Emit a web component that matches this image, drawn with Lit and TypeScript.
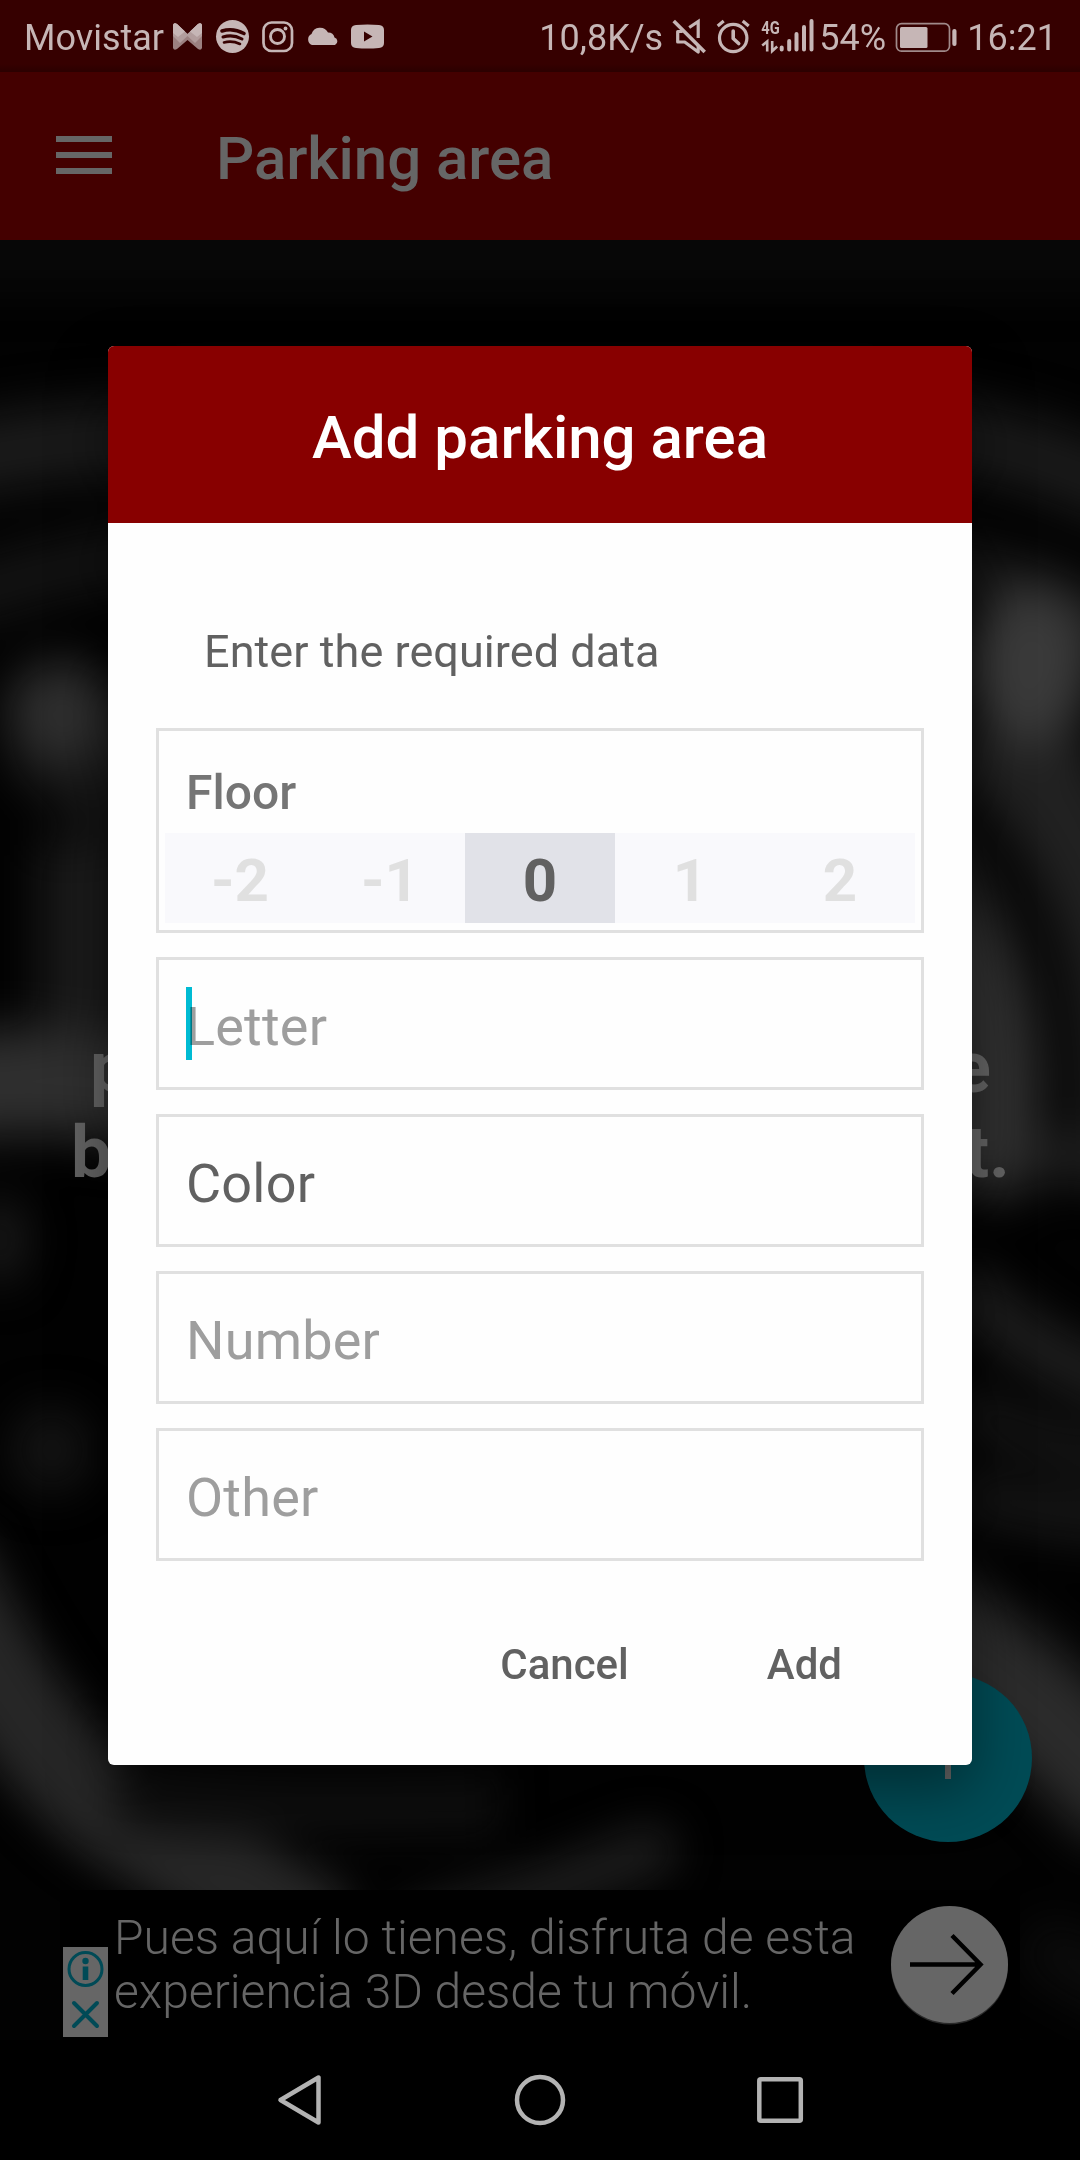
import { LitElement, html, svg, css } from "lit";
import { customElement, property } from "lit/decorators.js";
import { classMap } from "lit/directives/class-map.js";

const backdrop = svg`
  <defs>
    <filter id="soft" filterUnits="userSpaceOnUse" x="-150" y="-150" width="1400" height="2100" color-interpolation-filters="sRGB"><feGaussianBlur stdDeviation="24" /></filter>
    <filter id="mid" filterUnits="userSpaceOnUse" x="-150" y="-150" width="1400" height="2100" color-interpolation-filters="sRGB"><feGaussianBlur stdDeviation="21" /></filter>
  </defs>
  <rect width="1080" height="1800" fill="#020202" />
  <g fill="none" filter="url(#soft)">
    <path d="M-60 15 H1140" stroke="#090909" stroke-width="60" />
    <path d="M-60 225 Q60 195 180 200" stroke="#1b1b1b" stroke-width="75" />
    <path d="M-60 365 Q60 320 180 310" stroke="#141414" stroke-width="60" />
    <path d="M900 190 Q1020 200 1140 260" stroke="#1a1a1a" stroke-width="75" />
    <path d="M900 320 Q1010 320 1140 400" stroke="#181818" stroke-width="50" />
    <path d="M40 480 L140 560" stroke="#161616" stroke-width="120" />
    <ellipse cx="62" cy="472" rx="56" ry="52" fill="#2f2f2f" />
    <path d="M85 600 V800" stroke="#1b1b1b" stroke-width="90" />
    <path d="M-60 850 Q40 830 180 860" stroke="#2f2f2f" stroke-width="105" />
    <ellipse cx="0" cy="1000" rx="22" ry="44" fill="#1f1f1f" />
    <ellipse cx="52" cy="1210" rx="38" ry="42" fill="#161616" />
    <path d="M950 520 Q1090 640 1060 940" stroke="#212121" stroke-width="220" />
    <ellipse cx="1030" cy="425" rx="65" ry="80" fill="#3a3a3a" />
    <path d="M930 540 Q1075 660 1064 900" stroke="#030303" stroke-width="44" />
    <path d="M930 690 Q1025 790 970 950" stroke="#303030" stroke-width="95" />
    <path d="M960 1040 Q1030 1120 1140 1150" stroke="#222" stroke-width="48" />
    <path d="M960 1160 Q1030 1210 1140 1220" stroke="#1c1c1c" stroke-width="34" />
    <path d="M960 1250 Q1030 1275 1140 1280" stroke="#191919" stroke-width="44" />
    <path d="M900 1370 Q1000 1420 1140 1570" stroke="#2b2b2b" stroke-width="115" />
    <path d="M1030 1700 L1140 1760" stroke="#0c0c0c" stroke-width="60" />
  </g>
  <g fill="none" filter="url(#mid)">
    <path d="M-70 1310 Q10 1490 110 1570 Q220 1640 330 1700" stroke="#262626" stroke-width="104" />
    <path d="M120 1550 Q240 1570 500 1560" stroke="#0e0e0e" stroke-width="70" />
    <path d="M420 1690 L545 1652 L650 1610" stroke="#1a1a1a" stroke-width="56" stroke-linecap="round" />
  </g>
`;

@customElement("status-bar")
class StatusBar extends LitElement {
  static styles = css`
    :host {
      display: flex;
      justify-content: space-between;
      height: 72px;
      padding: 0 23px 0 24px;
      box-sizing: border-box;
      background: linear-gradient(#360000 64px, #2b0000 72px);
      color: #c6b6b6;
      font-size: 36px;
      line-height: 76px;
      white-space: nowrap;
    }
    .side { display: flex; }
    .carrier { width: 146px; }
    .speed { width: 129px; padding-left: 1px; box-sizing: border-box; }
    .percent { width: 69px; }
    svg { display: block; height: 72px; }
    .net { font: 700 18px/18px "Roboto", sans-serif; }
  `;
  render() {
    return html`
      <div class="side">
        <div class="carrier">Movistar</div>
        <svg width="220" viewBox="170 0 220 72" fill="currentColor">
          <path d="M173 25 Q174 22 177 24 L187.500 34 L198 24 Q201 22 202 25 V48 Q201 51 198 49 L187.500 40 L177 49 Q174 51 173 48Z" fill="#9b8080" />
          <path d="M173 25 Q174 22 177 24 L187.500 34 L198 24 Q201 22 202 25 V36 L195 43 L187.500 36 L180 43 L173 36Z" fill="#b29d9d" />
          <path d="M173 25 Q174 22 177 24 L185 31.500 L178 37 L173 33Z M202 25 Q201 22 198 24 L190 31.500 L197 37 L202 33Z" />
          <circle cx="232.500" cy="36.500" r="16.500" />
          <g fill="none" stroke="#360000" stroke-linecap="round">
            <path d="M222 31 Q233 27.500 244 33.500" stroke-width="3.600" />
            <path d="M223 37 Q233 34 242 39" stroke-width="3" />
            <path d="M224 42.500 Q232 40.200 240 44" stroke-width="2.600" />
          </g>
          <g fill="none" stroke="currentColor">
            <rect x="263.500" y="22.500" width="28.500" height="28.500" rx="8" stroke-width="2.700" />
            <circle cx="277.500" cy="36.500" r="7" stroke-width="2.900" />
          </g>
          <circle cx="285.500" cy="28.500" r="1.900" />
          <path d="M312 45 A6 6 0 0 1 311.500 34 A9 9 0 0 1 328 32.500 A6.500 6.500 0 0 1 334.500 37.500 A4 4 0 0 1 335 45Z" />
          <path fill-rule="evenodd" d="M356 25 Q367.500 24 379 25 Q384 25.500 384 30 V43 Q384 47.500 379 48 Q367.500 49 356 48 Q351 47.500 351 43 V30 Q351 25.500 356 25Z M364 31.500 V41.500 L372.500 36.500Z" />
        </svg>
      </div>
      <div class="side">
        <div class="speed">10,8K/s</div>
        <svg width="152" viewBox="667.300 0 152 72" fill="none" stroke="currentColor">
          <path d="M674 21 L705 52" stroke-width="3.600" />
          <path d="M689.500 27.500 L698.500 21.500 V38" stroke-width="3.200" />
          <path d="M683 31.500 H678 V42 H685 L698.500 52 V45" stroke-width="3.200" stroke-linejoin="round" />
          <circle cx="733.500" cy="38" r="13.700" stroke-width="3.200" />
          <path d="M733.500 31 V38.500 L739 43.500" stroke-width="3.600" stroke-linecap="round" stroke-linejoin="round" />
          <path d="M718 26 L724 21 M749 26 L743 21" stroke-width="3.200" />
          <path d="M762.500 45.500 L767.500 41.500 V51.500 M772.500 41 V51 L777.500 46.500" stroke-width="2.600" />
          <g stroke-width="4" stroke-linecap="round">
            <path d="M782 47.500 V49.500 M789.500 41 V49.500 M796.800 34 V49.500 M804.300 27 V49.500 M811.800 21 V49.500" />
          </g>
          <text class="net" x="761.500" y="33.500" fill="currentColor" stroke="none" textLength="18.500" lengthAdjust="spacingAndGlyphs">4G</text>
        </svg>
        <div class="percent">54%</div>
        <svg width="79" viewBox="888 0 79 72">
          <rect x="896.500" y="23.700" width="53" height="27.500" rx="5" fill="none" stroke="#a08a8a" stroke-width="1.700" />
          <rect x="900" y="27" width="27.500" height="21" rx="1.500" fill="currentColor" />
          <rect x="952.300" y="29" width="4.200" height="17" rx="2" fill="currentColor" />
        </svg>
        <div>16:21</div>
      </div>
    `;
  }
}

@customElement("form-field")
class FormField extends LitElement {
  @property() label = "";
  @property({ type: Boolean }) filled = false;
  @property({ type: Boolean }) focused = false;
  static styles = css`
    :host {
      display: flex;
      align-items: center;
      position: relative;
      height: 133px;
      box-sizing: border-box;
      border: 3px solid #e0e0e0;
      padding: 6px 27px 0;
      font-size: 54px;
      line-height: 64px;
      letter-spacing: 0.2px;
      color: #9e9e9e;
    }
    .filled { color: #616161; }
    .caret {
      position: absolute;
      left: 27px;
      top: 27px;
      width: 6px;
      height: 73px;
      background: #00bcd4;
      mix-blend-mode: multiply;
    }
  `;
  render() {
    return html`
      <span class=${classMap({ filled: this.filled })}>${this.label}</span>
      ${this.focused ? html`<i class="caret"></i>` : null}
    `;
  }
}

@customElement("parking-dialog")
class ParkingDialog extends LitElement {
  @property({ type: Number }) floor = 0;
  static styles = css`
    :host {
      display: block;
      width: 864px;
      height: 1419px;
      border-radius: 6px;
      overflow: hidden;
      background: #fefefe;
      box-shadow: 0 24px 60px rgba(0, 0, 0, 0.4);
    }
    .title {
      height: 177px;
      box-sizing: border-box;
      padding-top: 5px;
      display: flex;
      align-items: center;
      justify-content: center;
      background: #880000;
      color: #fff;
      font-size: 60px;
      font-weight: 500;
    }
    .hint {
      padding: 101px 96px 49px;
      font-size: 45px;
      line-height: 55px;
      letter-spacing: 0.06px;
      color: #616161;
    }
    .form { display: flex; flex-direction: column; gap: 24px; padding: 0 48px; }
    .floor { box-sizing: border-box; height: 205px; border: 3px solid #e0e0e0; padding: 32px 6px 0; }
    .label { padding-left: 21px; font-size: 48px; line-height: 60px; font-weight: 500; color: #757575; }
    .levels { display: grid; grid-template-columns: repeat(5, 1fr); margin-top: 10px; background: #f9f9fc; }
    .level {
      height: 90px;
      line-height: 95px;
      text-align: center;
      font-size: 60px;
      font-weight: 700;
      color: #e0e0e0;
      overflow: hidden;
    }
    .on { background: #e1e2e8; color: #616161; }
    .actions {
      display: flex;
      justify-content: flex-end;
      gap: 138px;
      padding: 78px 130px 0 0;
      font-size: 42px;
      line-height: 52px;
      font-weight: 500;
      color: #616161;
    }
  `;
  render() {
    return html`
      <div class="title">Add parking area</div>
      <div class="hint">Enter the required data</div>
      <div class="form">
        <div class="floor">
          <div class="label">Floor</div>
          <div class="levels">
            ${[-2, -1, 0, 1, 2].map(
              (n) => html`<div class=${classMap({ level: true, on: n === this.floor })}>${n}</div>`
            )}
          </div>
        </div>
        <form-field label="Letter" focused></form-field>
        <form-field label="Color" filled></form-field>
        <form-field label="Number"></form-field>
        <form-field label="Other"></form-field>
      </div>
      <div class="actions"><span>Cancel</span><span>Add</span></div>
    `;
  }
}

@customElement("ad-banner")
class AdBanner extends LitElement {
  static styles = css`
    :host {
      display: flex;
      align-items: center;
      width: 960px;
      height: 150px;
      box-sizing: border-box;
      padding: 0 12px 0 3px;
      background: #000;
      color: #666;
    }
    .choices { display: block; align-self: flex-end; margin-bottom: 3px; background: #666; }
    .copy { flex: 1; padding: 0 0 1px 6px; font-size: 48px; line-height: 54px; font-weight: 300; white-space: nowrap; }
    .go { display: block; }
  `;
  render() {
    return html`
      <svg class="choices" width="45" height="90" fill="none" stroke="#004a56" stroke-linecap="round">
        <circle cx="22.500" cy="22" r="16.500" stroke-width="3" />
        <circle cx="22.500" cy="14" r="3.200" fill="#004a56" stroke="none" />
        <rect x="19.700" y="19.500" width="5.600" height="13.500" fill="#004a56" stroke="none" />
        <path d="M11 56 L34 79 M34 56 L11 79" stroke-width="4" />
      </svg>
      <div class="copy">Pues aquí lo tienes, disfruta de esta<br />experiencia 3D desde tu móvil.</div>
      <svg class="go" width="117" height="119" viewBox="0 0 117 119">
        <circle cx="58.500" cy="60" r="58.500" fill="#2a2a2a" />
        <circle cx="58.500" cy="58.500" r="58.500" fill="#666" />
        <path d="M19 58.500 H89 M61 29.500 L89.500 58.500 L61 87.500" fill="none" stroke="#000" stroke-width="4.500" />
      </svg>
    `;
  }
}

@customElement("app-root")
class AppRoot extends LitElement {
  static styles = css`
    :host {
      display: flex;
      flex-direction: column;
      position: relative;
      width: 1080px;
      height: 2160px;
      overflow: hidden;
      background: #000;
      font-family: "Roboto", "Liberation Sans", sans-serif;
    }
    .appbar {
      display: flex;
      align-items: center;
      gap: 104px;
      height: 168px;
      padding-left: 56px;
      background: #440000;
      color: #666;
      font-size: 60px;
      font-weight: 500;
    }
    .menu { display: flex; flex-direction: column; gap: 10px; width: 56px; padding-bottom: 2px; }
    .menu i { height: 6px; background: #666; }
    .name { padding-top: 4px; letter-spacing: -0.05px; }
    .content {
      position: relative;
      display: flex;
      flex-direction: column;
      height: 1800px;
    }
    .photo { position: absolute; inset: 0; }
    .message {
      position: relative;
      padding-top: 785px;
      font-size: 72px;
      font-weight: 700;
      line-height: 85px;
      color: #636363;
    }
    .line { display: flex; justify-content: space-between; padding: 0 89px 0 90px; }
    .last { padding: 0 70px 0 71px; }
    .fab {
      position: absolute;
      left: 864px;
      top: 1434px;
      width: 168px;
      height: 168px;
    }
    ad-banner { position: relative; margin: auto 0 0 60px; }
    .overlay { position: absolute; left: 108px; top: 346px; }
    .nav { display: flex; height: 120px; background: #000; }
  `;
  render() {
    return html`
      <status-bar></status-bar>
      <div class="appbar">
        <div class="menu"><i></i><i></i><i></i></div>
        <div class="name">Parking area</div>
      </div>
      <div class="content">
        <svg class="photo" width="1080" height="1800">${backdrop}</svg>
        <div class="message">
          <div class="line"><span>p</span><span>e</span></div>
          <div class="line last"><span>b</span><span>t.</span></div>
        </div>
        <svg class="fab" viewBox="0 0 168 168">
          <circle cx="84" cy="84" r="84" fill="#004b55" />
          <path d="M84 63 V105 M63 84 H105" stroke="#666" stroke-width="6" />
        </svg>
        <ad-banner></ad-banner>
      </div>
      <div class="nav">
        <svg width="1080" height="120" fill="none" stroke="#b3b3b3" stroke-width="4.500" stroke-linejoin="round">
          <path d="M280.500 60 L318.500 37.500 V82.500Z" />
          <circle cx="540" cy="60" r="23" />
          <rect x="759.300" y="39.300" width="41.500" height="41.500" rx="1.500" />
        </svg>
      </div>
      <parking-dialog class="overlay"></parking-dialog>
    `;
  }
}
